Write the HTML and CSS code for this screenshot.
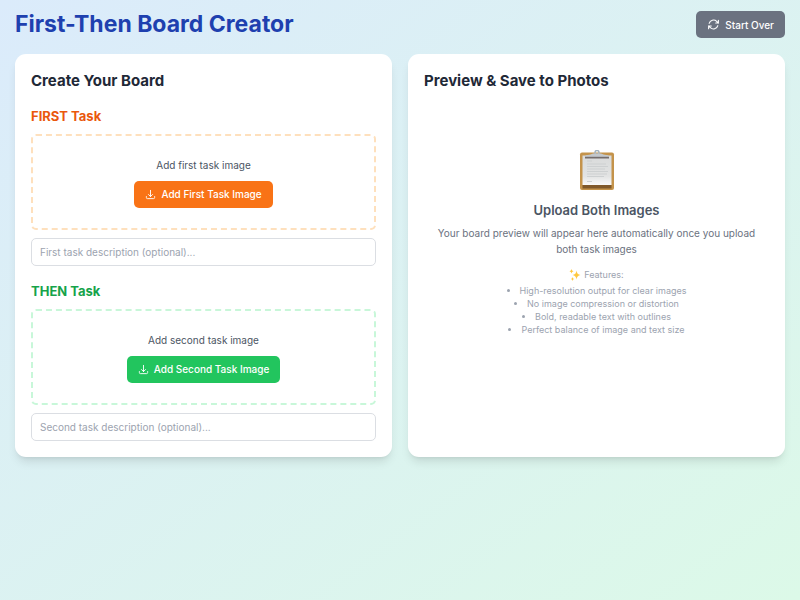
FILE: index.html
```html
<!DOCTYPE html>
<html lang="en">
  <head>
    <meta charset="UTF-8" />
    <meta name="viewport" content="width=device-width, initial-scale=1.0" />
    <title>First-Then Board Creator</title>
    <link rel="stylesheet" href="styles.css">
  </head>
  <body>
    <header class="header">
      <h1>First-Then Board Creator</h1>
      <button type="button" class="btn btn-reset">
        <svg class="icon icon-lg" viewBox="0 0 24 24" aria-hidden="true">
          <path d="M16.023 9.348h4.992v-.001M2.985 19.644v-4.992m0 0h4.992m-4.993 0l3.181 3.183a8.25 8.25 0 0013.803-3.7M4.031 9.865a8.25 8.25 0 0113.803-3.7l3.181 3.182m0-4.991v4.99" />
        </svg>
        Start Over
      </button>
    </header>

    <main class="columns">
      <section class="card">
        <h2>Create Your Board</h2>

        <div class="task">
          <h3 class="first-title">FIRST Task</h3>
          <div class="drop-zone first-zone">
            <p>Add first task image</p>
            <button type="button" class="btn btn-first">
              <svg class="icon" viewBox="0 0 24 24" aria-hidden="true">
                <path d="M3 16.5v2.25A2.25 2.25 0 005.25 21h13.5A2.25 2.25 0 0021 18.75V16.5M16.5 12L12 16.5m0 0L7.5 12m4.5 4.5V3" />
              </svg>
              Add First Task Image
            </button>
          </div>
          <input type="text" class="text-input" id="firstText" aria-label="First task description" placeholder="First task description (optional)..." />
        </div>

        <div class="task">
          <h3 class="then-title">THEN Task</h3>
          <div class="drop-zone then-zone">
            <p>Add second task image</p>
            <button type="button" class="btn btn-then">
              <svg class="icon" viewBox="0 0 24 24" aria-hidden="true">
                <path d="M3 16.5v2.25A2.25 2.25 0 005.25 21h13.5A2.25 2.25 0 0021 18.75V16.5M16.5 12L12 16.5m0 0L7.5 12m4.5 4.5V3" />
              </svg>
              Add Second Task Image
            </button>
          </div>
          <input type="text" class="text-input" id="thenText" aria-label="Second task description" placeholder="Second task description (optional)..." />
        </div>
      </section>

      <section class="card">
        <h2>Preview &amp; Save to Photos</h2>

        <div class="empty-preview">
          <svg class="clipboard" viewBox="0 0 40 40" aria-hidden="true">
            <defs>
              <linearGradient id="paper" x1="0" y1="0" x2="0" y2="1">
                <stop offset="0" stop-color="#d9dbdb" />
                <stop offset="0.7" stop-color="#e2e3e3" />
                <stop offset="1" stop-color="#fafafa" />
              </linearGradient>
            </defs>
            <rect x="3" y="2.5" width="34" height="37.5" rx="2" fill="#c4934b" />
            <path d="M5.500 35h29v3.500h-29z" fill="#80592b" />
            <path d="M5.500 5.500h29V35h-29z" fill="url(#paper)" />
            <path d="M10 11h5M10 14h19M10 16.500h21M10 19h18M10 21.500h21M10 24h20M10 26.500h17M10 31.500h5" stroke="#cdd0d1" stroke-width="1" />
            <circle cx="20" cy="2.500" r="2" fill="none" stroke="#a3b2bd" stroke-width="1.500" />
            <path d="M8 7c0-3 5-1.500 8-3.500h8c3 2 8 .5 8 3.500z" fill="#c3c8cc" />
            <path d="M8 6.800h24v1.700H8z" fill="#746d6c" />
          </svg>
          <h3>Upload Both Images</h3>
          <p>Your board preview will appear here automatically once you upload both task images</p>
          <div class="features">
            <div class="features-title">
              <svg class="sparkles" viewBox="0 0 12 12" aria-hidden="true">
                <path d="M7.500 1.500q.4 4 4 4.500-3.600.5-4 4.500-.4-4-4-4.500 3.600-.5 4-4.500z" fill="#ffc83d" />
                <path d="M2.500 0q.2 2 2 2.200-1.800.2-2 2.200-.2-2-2-2.200 1.800-.2 2-2.200z" fill="#ffc83d" />
                <path d="M3.500 8q.2 1.800 1.800 2-1.600.2-1.800 2-.2-1.800-1.800-2 1.600-.2 1.800-2z" fill="#ffc83d" />
              </svg>
              Features:
            </div>
            <ul>
              <li>High-resolution output for clear images</li>
              <li>No image compression or distortion</li>
              <li>Bold, readable text with outlines</li>
              <li>Perfect balance of image and text size</li>
            </ul>
          </div>
        </div>
      </section>
    </main>
  </body>
</html>
```

FILE: styles.css
```css
* {
  margin: 0;
  padding: 0;
  box-sizing: border-box;
}
body {
  min-height: 100vh;
  padding: 11px 15px;
  background: linear-gradient(to bottom right, #dbebfb, #dcf9e8);
  font-family: Inter, "Liberation Sans", sans-serif;
  font-size: 10px;
  line-height: 16px;
  color: #1f2937;
}

.header {
  display: flex;
  align-items: center;
  justify-content: space-between;
  margin-bottom: 16px;
}
h1 {
  font-size: 23px;
  line-height: 27px;
  font-weight: 700;
  color: #1e40af;
}
h2 {
  font-size: 15px;
  line-height: 21px;
  font-weight: 700;
  margin-bottom: 16px;
}
h3 {
  font-size: 13px;
  line-height: 19px;
  font-weight: 700;
}

/* Buttons */
.btn {
  display: inline-flex;
  align-items: center;
  gap: 5px;
  height: 27px;
  padding: 0 11px;
  border: none;
  border-radius: 5px;
  font: inherit;
  font-weight: 500;
  color: white;
  cursor: pointer;
}
.btn-reset {
  background-color: #6b7280;
}
.btn-first {
  background-color: #f97316;
}
.btn-then {
  background-color: #22c55e;
}
.icon {
  width: 11px;
  height: 11px;
  fill: none;
  stroke: currentColor;
  stroke-width: 2;
  stroke-linecap: round;
  stroke-linejoin: round;
}
.icon-lg {
  width: 13px;
  height: 13px;
}

/* Cards */
.columns {
  display: grid;
  grid-template-columns: 1fr 1fr;
  gap: 16px;
}
.card {
  padding: 16px;
  background-color: white;
  border-radius: 11px;
  box-shadow: 0 7px 10px -2px rgba(0, 0, 0, 0.1), 0 3px 4px -3px rgba(0, 0, 0, 0.1);
}

.task + .task {
  margin-top: 16px;
}
.first-title {
  color: #ea580c;
}
.then-title {
  color: #16a34a;
}
.drop-zone {
  display: flex;
  flex-direction: column;
  align-items: center;
  justify-content: center;
  gap: 8px;
  min-height: 96px;
  margin: 8px 0;
  border: 2px dashed;
  border-radius: 5px;
}
.drop-zone p {
  color: #4b5563;
}
.first-zone {
  border-color: #fee0bd;
}
.then-zone {
  border-color: #c8f7d9;
}
.text-input {
  display: block;
  width: 100%;
  height: 28px;
  padding: 0 8px;
  border: 1px solid #dbdee3;
  border-radius: 5px;
  font: inherit;
  color: #1f2937;
}
.text-input::placeholder {
  color: #9ca3af;
}

/* Preview */
.empty-preview {
  display: flex;
  flex-direction: column;
  align-items: center;
  padding: 43px 11px;
  text-align: center;
  color: #6b7280;
}
.clipboard {
  width: 40px;
  height: 40px;
  margin-bottom: 11px;
}
.empty-preview h3 {
  margin-bottom: 5px;
  font-weight: 600;
  color: #4b5563;
}
.features {
  margin-top: 11px;
  font-size: 9px;
  line-height: 13px;
  color: #9ca3af;
}
.features-title {
  display: flex;
  align-items: center;
  justify-content: center;
  gap: 3px;
  margin-bottom: 3px;
}
.sparkles {
  width: 12px;
  height: 12px;
}
.features ul {
  list-style-position: inside;
}
```
